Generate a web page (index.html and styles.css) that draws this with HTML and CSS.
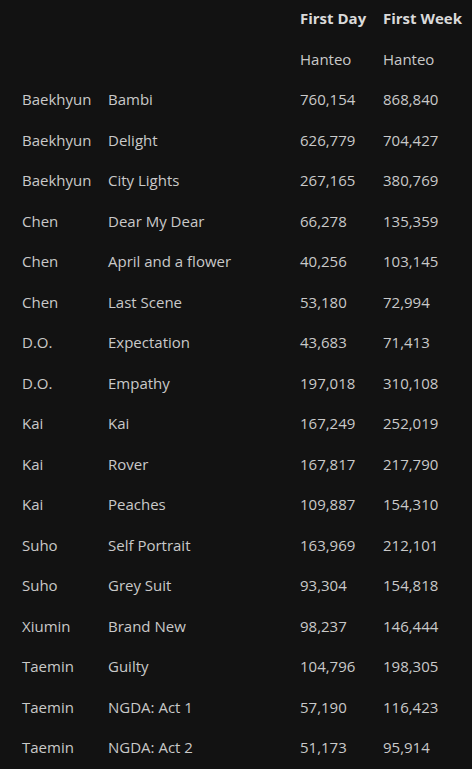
FILE: index.html
```html
<!DOCTYPE html>
<html>
<head>
<meta charset="utf-8">
<link rel="stylesheet" href="styles.css">
</head>
<body>
<table class="sales">
  <thead>
    <tr class="head"><th></th><th></th><th>First Day</th><th>First Week</th></tr>
    <tr><td></td><td></td><td>Hanteo</td><td>Hanteo</td></tr>
  </thead>
  <tbody>
    <tr><td>Baekhyun</td><td>Bambi</td><td>760,154</td><td>868,840</td></tr>
    <tr><td>Baekhyun</td><td>Delight</td><td>626,779</td><td>704,427</td></tr>
    <tr><td>Baekhyun</td><td>City Lights</td><td>267,165</td><td>380,769</td></tr>
    <tr><td>Chen</td><td>Dear My Dear</td><td>66,278</td><td>135,359</td></tr>
    <tr><td>Chen</td><td>April and a flower</td><td>40,256</td><td>103,145</td></tr>
    <tr><td>Chen</td><td>Last Scene</td><td>53,180</td><td>72,994</td></tr>
    <tr><td>D.O.</td><td>Expectation</td><td>43,683</td><td>71,413</td></tr>
    <tr><td>D.O.</td><td>Empathy</td><td>197,018</td><td>310,108</td></tr>
    <tr><td>Kai</td><td>Kai</td><td>167,249</td><td>252,019</td></tr>
    <tr><td>Kai</td><td>Rover</td><td>167,817</td><td>217,790</td></tr>
    <tr><td>Kai</td><td>Peaches</td><td>109,887</td><td>154,310</td></tr>
    <tr><td>Suho</td><td>Self Portrait</td><td>163,969</td><td>212,101</td></tr>
    <tr><td>Suho</td><td>Grey Suit</td><td>93,304</td><td>154,818</td></tr>
    <tr><td>Xiumin</td><td>Brand New</td><td>98,237</td><td>146,444</td></tr>
    <tr><td>Taemin</td><td>Guilty</td><td>104,796</td><td>198,305</td></tr>
    <tr><td>Taemin</td><td>NGDA: Act 1</td><td>57,190</td><td>116,423</td></tr>
    <tr><td>Taemin</td><td>NGDA: Act 2</td><td>51,173</td><td>95,914</td></tr>
  </tbody>
</table>
</body>
</html>
```
FILE: styles.css
```css
html, body {
  margin: 0;
  padding: 0;
  background: #121212;
}
body {
  font-family: "Open Sans", "Noto Sans", sans-serif;
  font-size: 15px;
  color: #c9c9c9;
}
.sales {
  border-collapse: collapse;
  margin: -2px 0 0 14px;
  table-layout: fixed;
}
.sales td, .sales th {
  height: 40.5px;
  padding: 0 8px;
  text-align: left;
  white-space: nowrap;
  box-sizing: border-box;
}
.sales td:nth-child(1), .sales th:nth-child(1) { width: 86px; }
.sales td:nth-child(2), .sales th:nth-child(2) { width: 192px; }
.sales td:nth-child(3), .sales th:nth-child(3) { width: 83px; }
.sales td:nth-child(4), .sales th:nth-child(4) { width: 95px; }
.sales th {
  font-weight: 700;
  color: #dadada;
}
```
